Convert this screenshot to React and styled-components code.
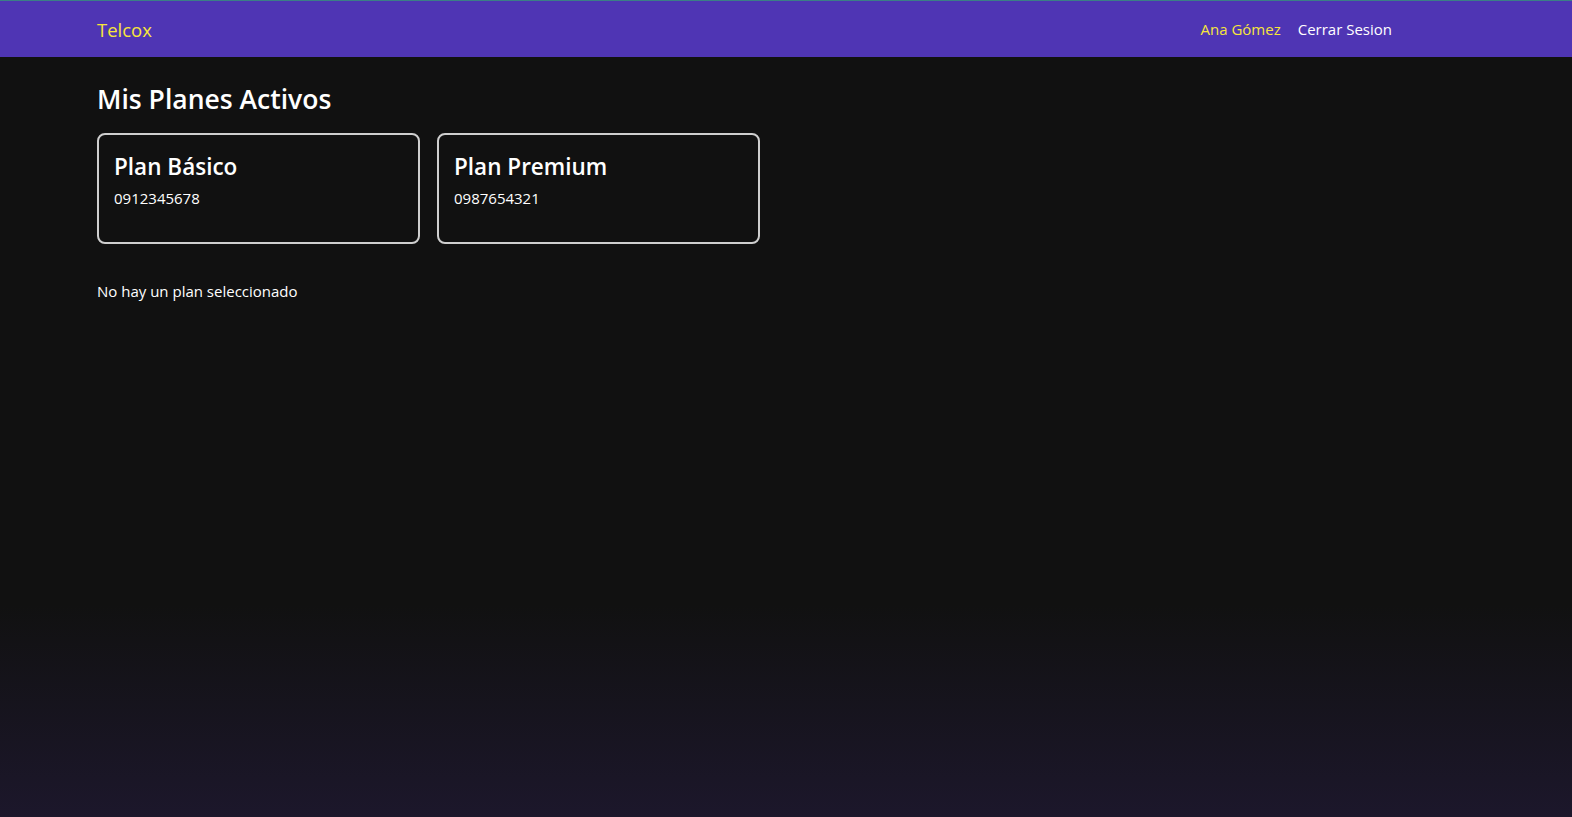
import React from "react";
import styled, { createGlobalStyle } from "styled-components";

const GlobalStyle = createGlobalStyle`
  html, body {
    margin: 0;
    padding: 0;
    height: 100%;
  }
  body {
    font-family: "Open Sans", "Noto Sans", sans-serif;
    color: #ffffff;
    background: linear-gradient(180deg, #111111 0%, #111111 74%, #1c172b 100%);
    background-attachment: fixed;
    min-height: 817px;
  }
`;

const Page = styled.div`
  min-height: 817px;
  border-top: 1px solid #3b7f86;
  box-sizing: border-box;
`;

const Navbar = styled.nav`
  background: #4f35b4;
  height: 56px;
  display: flex;
  align-items: center;
  justify-content: space-between;
  padding: 0 180px 0 97px;
`;

const Brand = styled.span`
  color: #f7e53b;
  font-size: 18.5px;
`;

const NavLinks = styled.div`
  display: flex;
  align-items: center;
  gap: 17px;
`;

const NavLink = styled.a`
  color: ${(p) => (p.highlight ? "#f7e53b" : "#ffffff")};
  font-size: 15px;
  text-decoration: none;
  cursor: pointer;
`;

const Main = styled.main`
  padding: 25px 97px;
`;

const Title = styled.h2`
  margin: 0 0 17px;
  font-size: 26.5px;
  font-weight: 600;
  line-height: 34px;
`;

const CardGrid = styled.div`
  display: flex;
  gap: 17px;
`;

const Card = styled.div`
  width: 323px;
  height: 111px;
  box-sizing: border-box;
  border: 2px solid #cfcfcf;
  border-radius: 8px;
  padding: 16px 15px;
  cursor: pointer;
`;

const CardTitle = styled.h3`
  margin: 0 0 5px;
  font-size: 22.5px;
  font-weight: 600;
  line-height: 32px;
`;

const CardNumber = styled.p`
  margin: 0;
  font-size: 15px;
  line-height: 20px;
`;

const EmptyText = styled.p`
  margin: 37px 0 0;
  font-size: 15px;
  line-height: 20px;
`;

const plans = [
  { id: 1, name: "Plan Básico", number: "0912345678" },
  { id: 2, name: "Plan Premium", number: "0987654321" },
];

export default function App() {
  return (
    <Page>
      <GlobalStyle />
      <Navbar>
        <Brand>Telcox</Brand>
        <NavLinks>
          <NavLink highlight>Ana Gómez</NavLink>
          <NavLink>Cerrar Sesion</NavLink>
        </NavLinks>
      </Navbar>
      <Main>
        <Title>Mis Planes Activos</Title>
        <CardGrid>
          {plans.map((plan) => (
            <Card key={plan.id}>
              <CardTitle>{plan.name}</CardTitle>
              <CardNumber>{plan.number}</CardNumber>
            </Card>
          ))}
        </CardGrid>
        <EmptyText>No hay un plan seleccionado</EmptyText>
      </Main>
    </Page>
  );
}
